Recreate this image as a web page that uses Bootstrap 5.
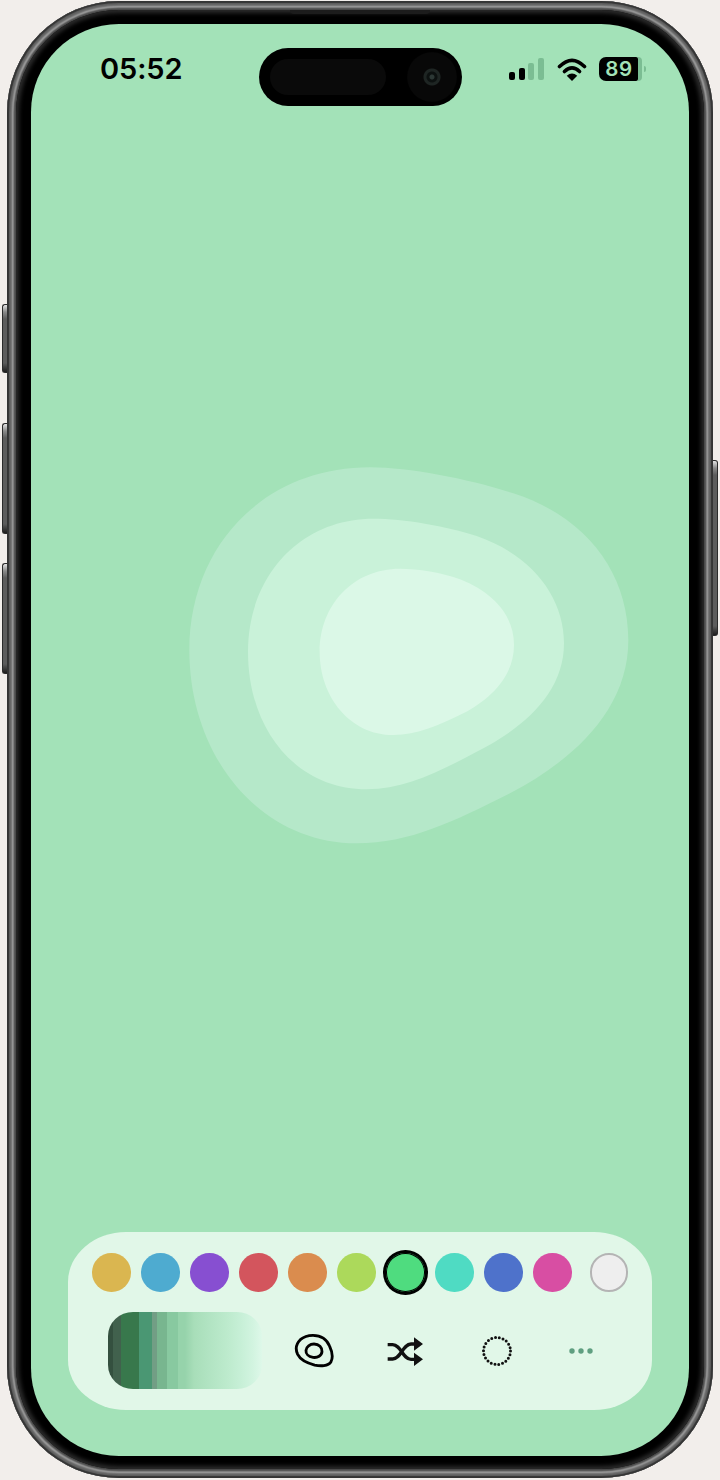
<!DOCTYPE html>
<html lang="en">
<head>
<meta charset="utf-8">
<title>Blob palette</title>
<link href="https://cdn.jsdelivr.net/npm/bootstrap@5.3.0/dist/css/bootstrap.min.css" rel="stylesheet">
<style>
html,body{margin:0;height:1480px;overflow:hidden;background:#f2eeeb}
.page-wrap{padding:1px 7px 2px;height:1480px}
.metal{height:100%;padding:9px;border-radius:112px;background:#444;position:relative;
 box-shadow:inset 0 0 1px 2px #343434,inset 0 0 2px 5px #626262,inset 0 0 2px 6.5px #b8b8b8,inset 0 0 2px 9px #484848}
.hw{position:absolute;width:5px;border:1px solid #2a2a2a;border-right:0;border-radius:3px 0 0 3px;
 background:linear-gradient(180deg,#e4e4e4 0,#8a8a8a 7px,#5c5c5c 14px,#5c5c5c calc(100% - 9px),#1e1e1e 100%)}
.hw-a{left:-5px;top:303px;height:69px}
.hw-b{left:-5px;top:422px;height:111px}
.hw-c{left:-5px;top:562px;height:111px}
.hw-d{right:-5px;top:459px;height:176px;border:1px solid #2a2a2a;border-left:0;border-radius:0 3px 3px 0}
.speaker{position:absolute;top:9px;left:283px;width:140px;height:4px;background:#1c1c1c;border-radius:0 0 4px 4px}
.bezel{height:100%;padding:14px 15px 13px;background:#000;border-radius:103px;box-shadow:inset 0 0 4px 3px #2c2c2c}
.screen{height:100%;background:#a3e2b8;border-radius:88px;overflow:hidden}
.status-time{width:228px;padding:25px 0 0 69px;font:600 29px/40px Inter,"Liberation Sans",sans-serif;color:#000;letter-spacing:-.1px}
.island{width:203px;height:58px;margin-top:24px;background:#000;border-radius:29px;padding:11px 5px 11px 11px}
.island-pill{width:116px;height:36px;border-radius:18px;background:#0a0a0a}
.island-cam{width:50px;height:50px;margin-top:-7px;border-radius:50%;background:radial-gradient(circle,#2c3835 0 2px,#0c1110 3px 5px,#1e2523 6px 8px,#080808 9px 24px,#050505 25px)}
.status-right{margin-left:47px;margin-top:33px;height:24px}
.sig-wrap{gap:3.5px}
.sig-bar{width:6px;border-radius:2px;background:#000}
.sig-1{height:8px}.sig-2{height:12px}
.sig-3{height:17px;background:#7bbd93}.sig-4{height:22px;background:#7bbd93}
.wifi-icon{margin-left:13px;width:30px;height:23px}
.batt{margin-left:12px}
.batt-body{width:39px;height:24px;padding-left:2px;border-radius:7px 2px 2px 7px;background:#000;color:#a3e2b8;font:600 20.5px/24px Inter,"Liberation Sans",sans-serif;letter-spacing:.6px;text-align:center}
.batt-rest{width:4px;height:24px;background:#7bbd93;border-radius:0 4px 4px 0}
.batt-tip{width:2px;height:6px;margin-left:2px;background:#7bbd93;border-radius:0 2px 2px 0}
.blob-zone{margin:344px 0 0 139px}
.blob-svg{display:block;width:480px;height:410px}
.panel{margin:0 37px 46px;height:178px;padding:21px 24px;background:#e1f7e8;border-radius:58px/50px}
.swatches{gap:10.5px;height:38.5px}
.dot-c{width:38.5px;height:38.5px;border-radius:50%;flex:none}
.c1{background:#dab650}.c2{background:#4eabd0}.c3{background:#874fd1}.c4{background:#d3555d}.c5{background:#da8c4e}
.c6{background:#acd95b}.c7{background:#4fdc7f;box-shadow:0 0 0 3px #000,inset 0 0 0 1px #000}
.c8{background:#4fdbc3}.c9{background:#4e72cb}.c10{background:#d84ea3}
.c11{background:#eeeeee;border:2px solid #b4b4b4}
.tools{margin-top:20.5px;height:77px}
.thumb{width:154px;height:77px;margin-left:16px;border-radius:25px/24px;flex:none;
 background:linear-gradient(90deg,#34503f 0 5px,#41614d 5px 13px,#38784c 13px 31px,#4a9773 31px 44px,#729e85 44px 49px,#78b68f 49px 59px,#88c9a0 59px 70px,#96d3ab 70px 77px,#a8deb9 86px,#b2e4c3 102px,#bceacc 118px,#c6efd6 132px,#d2f4e0 145px,#def8e9 154px)}
.slot{height:77px;padding:0;border:0;background:none}
.slot-a{width:91px;margin-left:6.5px}
.slot-s{width:91px}
.slot-b{width:93px}
.slot-c{width:75px}
.i-rings{width:42px;height:36.7px}
.i-shuffle{width:38px;height:32px}
.i-dotted{width:32px;height:32px}
.i-more{width:24px;height:6px}
</style>
</head>
<body>
<div class="page-wrap">
  <div class="metal">
    <span class="hw hw-a"></span><span class="hw hw-b"></span><span class="hw hw-c"></span><span class="hw hw-d"></span>
    <span class="speaker"></span>
    <div class="bezel">
      <div class="screen d-flex flex-column">
        <div class="d-flex align-items-start">
          <div class="status-time">05:52</div>
          <div class="island d-flex justify-content-between">
            <div class="island-pill"></div>
            <div class="island-cam"></div>
          </div>
          <div class="status-right d-flex align-items-center">
            <div class="d-flex align-items-end sig-wrap">
              <div class="sig-bar sig-1"></div><div class="sig-bar sig-2"></div><div class="sig-bar sig-3"></div><div class="sig-bar sig-4"></div>
            </div>
            <svg class="wifi-icon" viewBox="590 172 88 70" aria-hidden="true">
              <path d="M596 198Q634 160 672 198" fill="none" stroke="#000" stroke-width="11" stroke-linecap="round"/>
              <path d="M611 213Q634 191 657 213" fill="none" stroke="#000" stroke-width="11" stroke-linecap="round"/>
              <path d="M618 226Q634 213 650 226L634 242Z" fill="#000"/>
            </svg>
            <div class="batt d-flex align-items-center">
              <div class="batt-body">89</div><div class="batt-rest"></div><div class="batt-tip"></div>
            </div>
          </div>
        </div>
        <div class="blob-zone">
          <svg class="blob-svg" viewBox="0 0 1440 1230" aria-hidden="true">
            <path fill="#b5e8c9" d="M600 52C720 52 900 88 1030 130C1250 200 1375 370 1375 570C1375 780 1210 930 1020 1030C850 1115 720 1180 560 1180C270 1180 58 920 58 600C58 290 280 52 600 52Z"/>
            <path fill="#c9f2d9" d="M610 206C700 206 830 228 920 258C1085 315 1182 440 1182 580C1182 730 1060 835 920 905C810 965 700 1018 590 1018C380 1018 234 840 234 605C234 380 390 206 610 206Z"/>
            <path fill="#dbf8e7" d="M690 356C740 356 820 368 870 388C975 430 1032 500 1032 585C1032 680 960 748 880 790C810 825 740 855 670 855C540 855 449 740 449 605C449 465 550 356 690 356Z"/>
          </svg>
        </div>
        <div class="panel mt-auto">
          <div class="swatches d-flex">
            <div class="dot-c c1"></div><div class="dot-c c2"></div><div class="dot-c c3"></div><div class="dot-c c4"></div><div class="dot-c c5"></div>
            <div class="dot-c c6"></div><div class="dot-c c7"></div><div class="dot-c c8"></div><div class="dot-c c9"></div><div class="dot-c c10"></div>
            <div class="dot-c c11 ms-auto"></div>
          </div>
          <div class="tools d-flex align-items-center">
            <div class="thumb"></div>
            <button type="button" class="slot slot-a d-flex align-items-center justify-content-center" aria-label="Shape">
              <svg class="i-rings" viewBox="730 335 126 110" aria-hidden="true" fill="none" stroke="#000" stroke-width="8.5">
                <path d="M790 345C815 345 832 358 840 378C848 395 850 412 844 424C836 438 812 438 795 434C772 428 752 418 744 402C736 385 740 370 752 358C762 349 776 345 790 345Z"/>
                <path d="M793 371C808 371 818 382 817 394C816 406 804 413 790 411C776 409 768 400 769 390C770 379 781 371 793 371Z"/>
              </svg>
            </button>
            <button type="button" class="slot slot-s d-flex align-items-center justify-content-center" aria-label="Shuffle">
              <svg class="i-shuffle" viewBox="80 343 114 96" aria-hidden="true">
                <path d="M85 372H100C125 372 130 416 155 416H170M85 415H100C125 415 130 370 155 370H170" fill="none" stroke="#111" stroke-width="10"/>
                <path d="M164 350L191 370L164 390ZM164 396L191 416L164 436Z" fill="#111"/>
              </svg>
            </button>
            <button type="button" class="slot slot-b d-flex align-items-center justify-content-center" aria-label="Outline">
              <svg class="i-dotted" viewBox="0 0 32 32" aria-hidden="true">
                <circle cx="16" cy="16" r="13.5" fill="none" stroke="#111" stroke-width="3" stroke-linecap="round" stroke-dasharray="0 3.856"/>
              </svg>
            </button>
            <button type="button" class="slot slot-c d-flex align-items-center justify-content-center" aria-label="More">
              <svg class="i-more" viewBox="0 0 24 6" aria-hidden="true" fill="#5f9f80">
                <circle cx="3" cy="3" r="2.7"/><circle cx="12" cy="3" r="2.7"/><circle cx="21" cy="3" r="2.7"/>
              </svg>
            </button>
          </div>
        </div>
      </div>
    </div>
  </div>
</div>
<script src="https://cdn.jsdelivr.net/npm/bootstrap@5.3.0/dist/js/bootstrap.bundle.min.js"></script>
</body>
</html>
